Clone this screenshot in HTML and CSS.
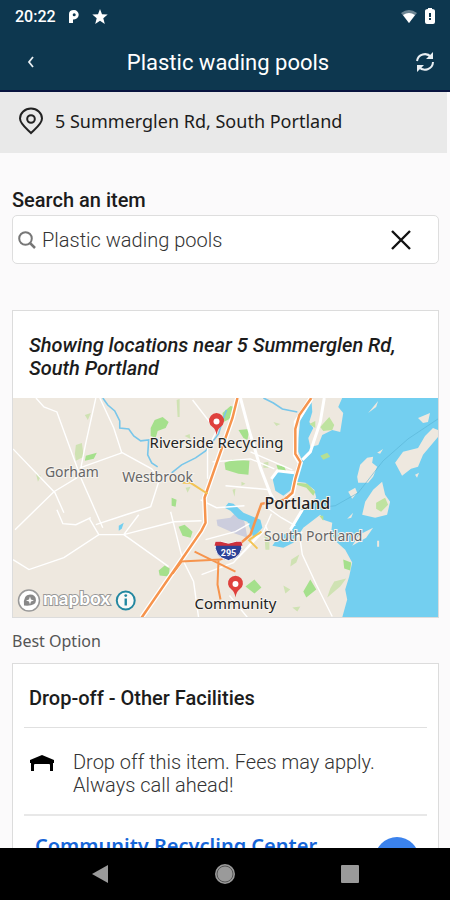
FILE: index.html
```
<!DOCTYPE html>
<html lang="en">
<head>
  <meta charset="UTF-8">
  <meta name="viewport" content="width=device-width, initial-scale=1.0">
  <title>Plastic wading pools</title>
  <link rel="stylesheet" href="styles.css">
</head>
<body>
  <header class="top">
    <div class="status-bar">
      <span>20:22</span>
      <svg width="12" height="15" viewBox="0 0 12 15"><path d="M1 14V5q0-4 5-4a4.700 4.700 0 0 1 0 9.400H5V14z" fill="#fff"/><circle cx="6.200" cy="5.700" r="1.500" fill="#0d374f"/></svg>
      <svg width="16" height="15" viewBox="0 0 16 15"><path d="M8 0l2 5.300 5.700.3-4.400 3.600L12.800 15 8 11.700 3.200 15l1.500-5.800L.3 5.600 6 5.300z" fill="#fff"/></svg>
      <svg class="status-wifi" width="16" height="13" viewBox="0 0 16 13"><path d="M0 3Q8-3 16 3L8 13z" fill="#6d8593"/><path d="M2 5Q8 1 14 5L8 13z" fill="#fff"/></svg>
      <svg width="10" height="16" viewBox="0 0 10 16"><path d="M3 0h4v1q3 0 3 2v11q0 2-2 2H2q-2 0-2-2V3q0-2 3-2z" fill="#fff"/><path d="M4 5h2v4H4zM4 10h2v2H4z" fill="#0d374f"/></svg>
    </div>
    <div class="title-bar">
      <button aria-label="Back">
        <svg width="22" height="22" viewBox="0 0 22 22"><path d="M13 6l-4 5 4 5" fill="none" stroke="#e8eef2" stroke-width="1.800"/></svg>
      </button>
      <h1>Plastic wading pools</h1>
      <button aria-label="Refresh">
        <svg width="22" height="22" viewBox="0 0 22 22"><g fill="none" stroke="#e8eef2" stroke-width="2"><path d="M3 10a8 8 0 0 1 14-4"/><path d="M19 11a8 8 0 0 1-14 5"/></g><path d="M19 1v7h-7zM3 21v-7h7z" fill="#e8eef2"/></svg>
      </button>
    </div>
  </header>

  <main>
    <div class="address">
      <svg width="26" height="28" viewBox="0 0 26 28" fill="none" stroke="#222" stroke-width="2"><path d="M13 26C9 22 2 17 2 11.500a11 10 0 0 1 22 0C24 17 17 22 13 26z"/><circle cx="13" cy="12" r="3.800"/></svg>
      <span>5 Summerglen Rd, South Portland</span>
    </div>

    <form class="search">
      <label for="item">Search an item</label>
      <div class="search-box">
        <svg width="18" height="18" viewBox="0 0 18 18" fill="none" stroke="#777" stroke-width="2"><circle cx="7.500" cy="7.500" r="6.300"/><path d="M12 12l5 5" stroke-width="2.500"/></svg>
        <input id="item" type="text" value="Plastic wading pools">
        <button type="reset" aria-label="Clear">
          <svg width="20" height="20" viewBox="0 0 20 20"><path d="M1 1l18 18M19 1L1 19" stroke="#111" stroke-width="2.400"/></svg>
        </button>
      </div>
    </form>

    <section class="card">
      <h2 class="near">Showing locations near 5 Summerglen Rd, South Portland</h2>
      <svg class="map" viewBox="12 398 426 220" role="img" aria-label="Map of Portland">
        <rect x="12" y="398" width="426" height="220" fill="#eee8df"/>

        <!-- parks -->
        <g fill="#a5e08c">
          <path d="M150 428l4-8 8-3 6 5-3 6-8 3-2 7-5-2zM85 456l11-3-3 6-9 2zM171 498l5 2-1 7-4-1zM178 527l6-2 8 7-2 6-8-2zM158 571l6-5 5 3-1 8-9-1z"/>
          <path d="M224 463l8-3 17 1-1 14-10-1-13-4zM238 430l11-1-2 11-4-2zM276 465l8 2 2 5-8-1zM245 587l9-7 7 8-7 6zM303 592l7-12 6 10-10 8zM343 560l8 3-1 8-6-2zM222 413l8-7 4 1-5 12-6 3z"/>
        </g>
        <g fill="#cfe2b3">
          <path d="M75 445l6-2 2 14-8 4-1-7zM84 415l6-2-3 7zM35 474l5 2-3 6zM176 400l3-1v18h-2zM184 436l5-2 1 5zM185 488l5-1-3 6zM291 560l8-5-3 8-6 4zM283 586l7 4-5 4zM334 582l12-3-6 8-13 11 3-9zM292 608l8-1-3 5zM264 535l5-1v16h-4zM263 463l5-1v6h-5zM273 422l7 2-4 2zM232 490l3-1-1 8zM241 482l4 2-4 2z"/>
        </g>
        <path d="M216 520l14-2 6-6 8 10 3 16-12-4-18-8z" fill="#cccddd"/>

        <!-- rivers and bay -->
        <g fill="none" stroke="#78c6ea" stroke-width="1.600">
          <path d="M102 398l5 7 7 6 5 10v7l9 1 5 7 7 5 8-1-1 15 4 8 6 4M171 473l10-8 14-7 10-7 13-17 4-13 4-11M263 398l10 5 9 6 15 3"/>
        </g>
        <g fill="#73cff0">
          <path d="M315 398L307 408 300 420 298 438 298 452 302 461 296 470 296 482 305 483 314 490 316 498 305 508 297 520 290 532 278 537 272 546 283 548 293 543 303 528 320 515 323 520 332 523 331 532 335 541 345 550 352 563 349 577 345 590 347 600 342 618H438V398z"/>
          <path d="M272 478l5-6 17 1-3 17-8 6-8-5zM118 526l5-3-2 6-3 2zM228 503l5 1 10 9 17 7 2 8-9 10-6-16-9-3-8-8-6-3z"/>
        </g>

        <!-- peninsula and islands -->
        <g fill="#eee8df">
          <path d="M311 398H342L338 407 343 413 340 432 332 430 322 435 318 445 310 447 308 438 313 428 309 422 312 412z"/>
          <path d="M367 458L373 457 372 463 377 467 373 477 368 483 358 483 357 477 360 465z"/>
          <path d="M382 482L385 495 390 502 387 515 375 518 362 515 365 502 373 490z"/>
          <path d="M348 492L355 488 357 493 352 499zM418 418L430 413 428 422 423 423zM368 413L378 401 376 407zM377 453L383 449 380 454zM347 519L353 513 351 518zM415 475L419 473 417 478zM377 541h2v6h-2z"/>
          <path d="M395 463L403 452 418 448 425 436 433 428 438 430 438 437 423 455 418 467 411 469 402 476z"/>
          <path d="M352 546L359 535 373 528 366 538z"/>
        </g>
        <path d="M320 427l9-10 5 8-2 5-9 1zM376 503l9-5 3 7-7 7-5-3zM309 424l6-3v7z" fill="#bfe3a0"/>
        <path d="M297 483l10 1 8 8-2 4-7-8-10-3zM320 456l7-3 3 4-7 3zM319 516l4 0 0 5z" fill="#b5df92"/>

        <!-- minor roads -->
        <g fill="none" stroke="#fff" stroke-width="1.400">
          <path d="M35 398l8 9 13 5 24 66 22 50M95 398l-10 45-5 25-4 10-23 14-39 38M99 398l14 30 8 25-42 15M12 449l42 44 9 20M120 452l31 17 8 10-9 28-25 8M125 515l-30 10M12 560l16 10 35-12 35-23 25 0 50-13 28-1M123 535l45 32M170 512l12 48 11 22 5 36M192 400l24 31-9 18v30M56 510l6 14 13 1 15-7M88 518l10 17M123 535l15-20"/>
          <path d="M250 452l42 18M225 486l45 4M212 462l38-3 24 10M205 540l30-8 14-8M201 575l32-12 25-28M238 558l25-26 8-18M265 525l5 14 24 1 8-8M229 596l18 22M200 500l16 8 28-2M264 506l17 12 14 8M205 525l-20 30M300 541l2 14 14 30 16 32"/>
        </g>
        <g fill="none" stroke="#fff" stroke-width="3"><path d="M240 398l8 30 12 40 10 26 6 10M324 398l-4 24-10 30-8 8M294 473l-17-2-6 8M290 530l12-20"/></g>

        <!-- highways -->
        <path d="M237 398l-5 20-13 37-15 43 1 25-4 8-60 87M311 398l-15 24-1 33 5 8-5 17-3 14-5 4" fill="none" stroke="#fff" stroke-width="5"/>
        <path d="M237 398l-5 20-13 37-15 43 1 25-4 8-60 87M311 398l-12 17-4 14v25l5 8-5 17-3 14-8 7-23 4-5 14-6 17-15 13" fill="none" stroke="#f6944d" stroke-width="2.500"/>
        <path d="M194 552l41 20M180 562l40-2 14-7M218 560l-1 25 3 15M172 574l9-12" fill="none" stroke="#f6944d" stroke-width="2"/>
        <path d="M182 483h8l17 11M249 540l12-8M248 540l9 9" fill="none" stroke="#f3c455" stroke-width="2"/>
        <path d="M438 419l-30 20-25 22-25 32-23 13-35 4" fill="none" stroke="#58b1d4" stroke-opacity=".6" stroke-width="1"/>

        <!-- interstate shield -->
        <path d="M215 542h5l8 2 8-2h5q3 15-13 19-16-4-13-19z" fill="#2d4297" stroke="#fff" stroke-width="1"/>
        <path d="M215 542h5l8 2 8-2h5l1 4h-28z" fill="#cf313c"/>
        <text class="shield-label" x="228" y="556">295</text>

        <g class="labels">
          <text class="town" x="71" y="477">Gorham</text>
          <text class="town" x="157" y="482">Westbrook</text>
          <text class="town" x="313" y="541">South Portland</text>
          <text class="city" x="297" y="509">Portland</text>
          <text class="place" x="216" y="448">Riverside Recycling</text>
          <text class="place" x="235" y="610">Community</text>
        </g>

        <!-- pins -->
        <g fill="#df413d">
          <path d="M216 435q-1-6-4-8a7.500 7.500 0 1 1 8 0q-3 2-4 8z"/>
          <path d="M235 598q-1-6-4-8a7.500 7.500 0 1 1 8 0q-3 2-4 8z"/>
        </g>
        <circle cx="216" cy="421.500" r="3" fill="#fff"/>
        <circle cx="235" cy="584.500" r="3" fill="#fff"/>

        <!-- attribution -->
        <circle cx="28" cy="601" r="10.500" fill="#fff" stroke="#999" stroke-width="1.500"/>
        <path d="M23 606q-1-11 6-11 6 0 6 6 0 6-12 5z" fill="#888"/>
        <path d="M29 597l1 3 3 1-3 1-1 3-1-3-3-1 3-1z" fill="#fff"/>
        <text class="mapbox" x="42" y="606">mapbox</text>
        <circle cx="125" cy="601" r="9" fill="#fff" fill-opacity=".7" stroke="#2387a0" stroke-width="2"/>
        <path d="M125 599v7" stroke="#2387a0" stroke-width="2.400"/>
        <circle cx="125" cy="596" r="1.400" fill="#2387a0"/>
      </svg>
    </section>

    <p class="best">Best Option</p>

    <section class="card facilities">
      <h2>Drop-off - Other Facilities</h2>
      <div class="note">
        <svg width="26" height="18" viewBox="0 0 26 18"><path d="M13 1l12 5v3h-1v8h-3v-6q0-1-1-1H6q-1 0-1 1v6H2V9H1V6z" fill="#000"/></svg>
        <p>Drop off this item. Fees may apply. Always call ahead!</p>
      </div>
      <div class="facility">
        <a href="#center">Community Recycling Center</a>
        <button class="directions" aria-label="Directions"></button>
      </div>
    </section>
  </main>

  <nav class="nav-bar">
    <button aria-label="Back"><svg width="22" height="22" viewBox="0 0 22 22"><path d="M3 11l16-9v18z" fill="#9a9a9a"/></svg></button>
    <button aria-label="Home"><svg width="22" height="22" viewBox="0 0 22 22"><circle cx="11" cy="11" r="10" fill="#9a9a9a"/><circle cx="11" cy="11" r="8" fill="none" stroke="#555" stroke-width="1"/></svg></button>
    <button aria-label="Recents"><svg width="22" height="22" viewBox="0 0 22 22"><rect x="2" y="2" width="18" height="18" rx="1" fill="#9a9a9a"/></svg></button>
  </nav>
</body>
</html>
```
FILE: styles.css
```
* {
  box-sizing: border-box;
}

body {
  margin: 0;
  height: 100vh;
  display: flex;
  flex-direction: column;
  background: #fbfafb;
  color: #1c1c1c;
  font-family: Roboto, "Liberation Sans", sans-serif;
}

h1, h2, p {
  margin: 0;
}

button {
  padding: 0;
  border: 0;
  background: none;
  display: flex;
  align-items: center;
  justify-content: center;
}

svg {
  display: block;
  flex: none;
}

/* header */
.top {
  flex: none;
  background: #0d374f;
  border-bottom: 2px solid #08143f;
  color: #fff;
}

.status-bar {
  display: flex;
  align-items: center;
  gap: 12px;
  height: 32px;
  padding: 0 15px;
  font-size: 16px;
  font-weight: 500;
}

.status-wifi {
  margin-left: auto;
}

.status-bar svg:last-child {
  margin-left: -4px;
}

.title-bar {
  display: flex;
  align-items: center;
  height: 58px;
  padding: 2px 14px 0 20px;
}

.title-bar h1 {
  flex: 1;
  text-align: center;
  font-size: 22px;
  font-weight: 400;
}

/* content */
main {
  flex: 1;
  min-height: 0;
  overflow: hidden;
}

.address {
  display: flex;
  align-items: center;
  gap: 11px;
  height: 61px;
  margin-right: 3px;
  padding: 0 18px 4px;
  background: #e9e9e9;
  font: 18px "Noto Sans", sans-serif;
}

.search {
  padding: 36px 11px 0 12px;
}

.search label {
  display: block;
  font-size: 20px;
  font-weight: 500;
  line-height: 22px;
}

.search-box {
  display: flex;
  align-items: center;
  gap: 6px;
  height: 49px;
  margin-top: 4px;
  padding: 0 27px 0 5px;
  border: 1px solid #dedede;
  border-radius: 5px;
  background: #fff;
}

.search-box input {
  flex: 1;
  min-width: 0;
  padding: 0;
  border: 0;
  outline: 0;
  background: none;
  color: #333;
  font: 300 20px Roboto, sans-serif;
}

.card {
  margin: 46px 11px 0 12px;
  border: 1px solid #dcdcdc;
  background: #fff;
}

.card h2 {
  font-size: 20px;
  font-weight: 500;
  line-height: 23px;
}

.card .near {
  padding: 23px 16px 18px;
  font-style: italic;
}

.map {
  width: 100%;
  height: auto;
}

.labels {
  font-family: "Noto Sans", sans-serif;
  text-anchor: middle;
  paint-order: stroke;
  stroke: #f6f3ee;
  stroke-width: 2px;
}

.town {
  font-size: 14px;
  fill: #666;
}

.city {
  font-size: 16px;
  font-weight: 500;
  fill: #222;
}

.place {
  font-size: 15px;
  fill: #222;
}

.shield-label {
  font: bold 9px Roboto, sans-serif;
  text-anchor: middle;
  fill: #fff;
}

.mapbox {
  font: bold 19px Lato, sans-serif;
  fill: #fff;
  stroke: #999;
  stroke-width: 2px;
  paint-order: stroke;
}

.best {
  padding: 12px 12px 0;
  color: #555;
  font: 16px/22px "Noto Sans", sans-serif;
}

.card.facilities {
  margin-top: 11px;
  padding: 0 11px;
}

.facilities h2 {
  padding: 23px 5px 17px;
  border-bottom: 1px solid #e0e0e0;
}

.note {
  display: flex;
  gap: 18px;
  padding: 23px 5px 17px;
  border-bottom: 2px solid #e8e8e8;
  color: #333;
  font-size: 20px;
  font-weight: 300;
  line-height: 23px;
}

.note svg {
  margin-top: 3px;
}

.facility {
  display: flex;
  align-items: flex-start;
  justify-content: space-between;
  padding: 16px 8px 16px 11px;
}

.facility a {
  color: #1565d8;
  font: 600 20px/28px "Noto Sans", sans-serif;
  text-decoration: none;
}

.directions {
  width: 44px;
  height: 44px;
  margin-top: 5px;
  border-radius: 50%;
  background: #3b82ec;
}

/* system navigation */
.nav-bar {
  flex: none;
  display: flex;
  justify-content: space-around;
  height: 52px;
  padding: 0 37px;
  background: #000;
}

.nav-bar button {
  height: 100%;
}
```
